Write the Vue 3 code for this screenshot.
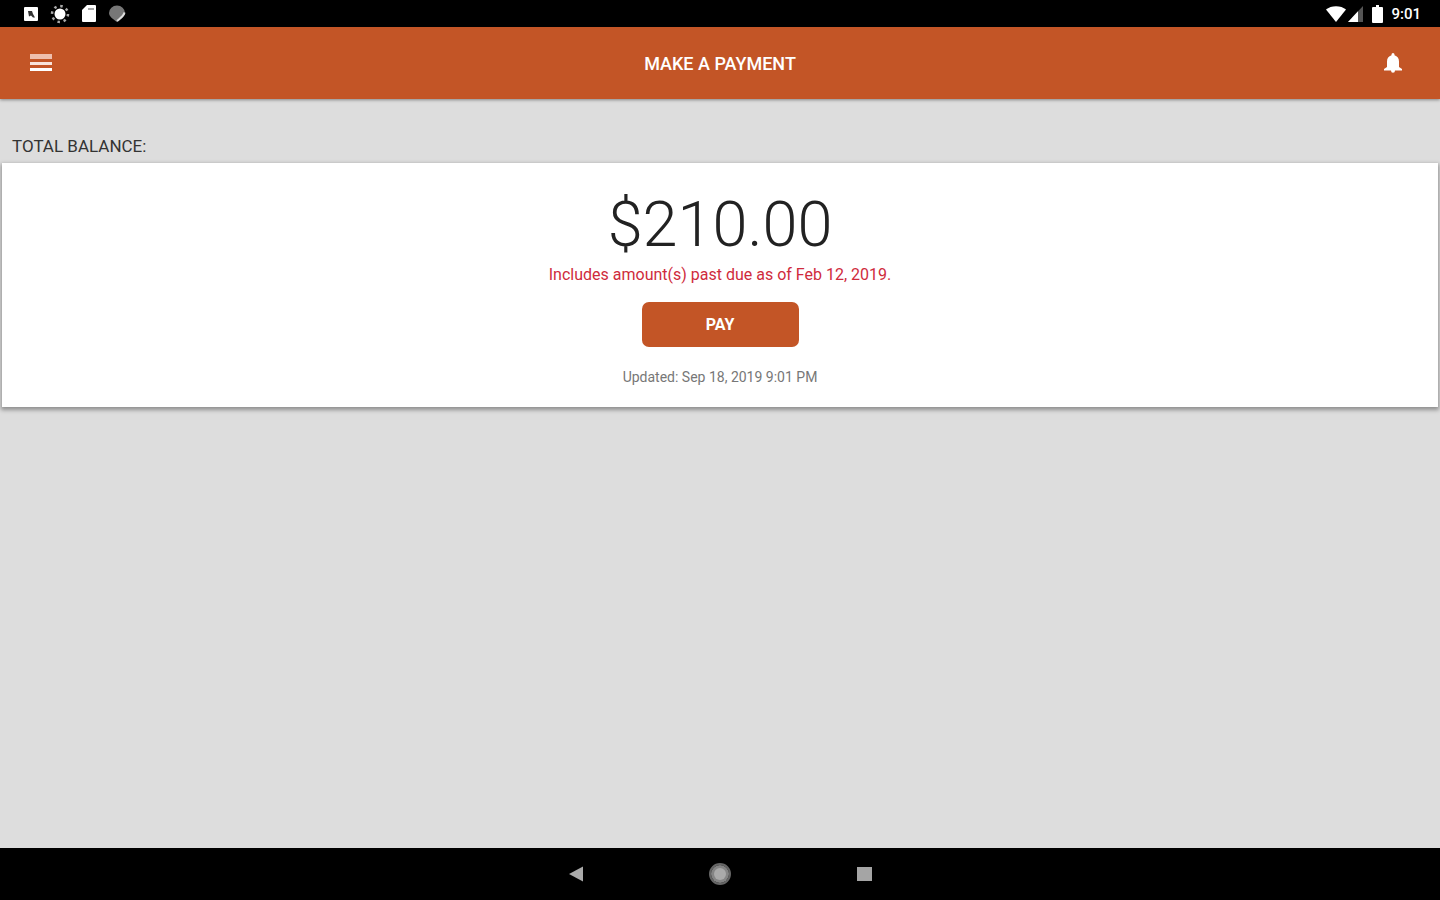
<script setup>
import { ref } from 'vue'

const time = ref('9:01')
const balance = ref('$210.00')
const pastDueDate = ref('Feb 12, 2019')
const updatedAt = ref('Sep 18, 2019 9:01 PM')
</script>

<template>
  <div class="screen">
    <div class="status-bar">
      <div class="status-left">
        <svg width="14" height="14" viewBox="0 0 14 14">
          <rect width="14" height="14" rx="1" fill="#fff" />
          <path d="M4 4h4l1 3 2 3.500H9L7 8.500 5 9.500z" fill="#333" />
        </svg>
        <svg width="20" height="20" viewBox="0 0 20 20">
          <circle cx="10" cy="10" r="8" fill="none" stroke="#aaa" stroke-width="2.500" stroke-dasharray="2.500 3.780" />
          <circle cx="10" cy="10" r="5.500" fill="#fff" />
        </svg>
        <svg width="14" height="17" viewBox="0 0 14 17">
          <path d="M5 0h8a1 1 0 0 1 1 1v15a1 1 0 0 1-1 1H1a1 1 0 0 1-1-1V5z" fill="#fff" />
          <path d="M6 4h6" stroke="#888" stroke-width="1.500" />
        </svg>
        <svg width="18" height="17" viewBox="0 0 18 17">
          <path d="M9 0.500a8 7.500 0 0 1 8 7.500c0 3-4 6-8 9C5 14 1 11.500 1 8a8 7.500 0 0 1 8-7.500z" fill="#777" />
          <path d="M16.500 7.500C16 11 12 13.500 9 16" fill="none" stroke="#ddd" stroke-width="2" />
        </svg>
      </div>
      <div class="status-right">
        <svg width="20" height="16" viewBox="0 0 20 16">
          <path d="M0 3.500C5-1 15-1 20 3.500L10 16z" fill="#fff" />
        </svg>
        <svg class="signal" width="15" height="16" viewBox="0 0 15 16">
          <path d="M0 16L15 0v16z" fill="#555" />
          <path d="M0 16L10 5.300V16z" fill="#fff" />
        </svg>
        <svg class="battery" width="11" height="18" viewBox="0 0 11 18">
          <path d="M4 0h3v2h3a1 1 0 0 1 1 1v14a1 1 0 0 1-1 1H1a1 1 0 0 1-1-1V3a1 1 0 0 1 1-1h3z" fill="#fff" />
        </svg>
        <span class="time">{{ time }}</span>
      </div>
    </div>

    <header class="app-bar">
      <button class="icon-btn" type="button" aria-label="Menu">
        <svg width="22" height="18" viewBox="0 0 22 18">
          <rect width="22" height="5" fill="#eebfae" />
          <rect y="8" width="22" height="3" fill="#f9e3da" />
          <rect y="14" width="22" height="3" fill="#fff" />
        </svg>
      </button>
      <h1>MAKE A PAYMENT</h1>
      <button class="icon-btn alerts" type="button" aria-label="Notifications">
        <svg width="18" height="20" viewBox="0 0 18 20">
          <path d="M9 0a1.500 1.500 0 0 1 1.500 1.500v.7C13.400 3 15 5.400 15 8.500V14l3 2v1.500H0V16l3-2V8.500C3 5.400 4.600 3 7.500 2.200v-.7A1.500 1.500 0 0 1 9 0zM7 17.500h4a2 2.200 0 0 1-4 0z" fill="#fff" />
        </svg>
      </button>
    </header>

    <main>
      <h2>TOTAL BALANCE:</h2>
      <section class="card">
        <div class="amount">{{ balance }}</div>
        <p class="past-due">Includes amount(s) past due as of {{ pastDueDate }}.</p>
        <button class="pay-btn" type="button">PAY</button>
        <p class="updated">Updated: {{ updatedAt }}</p>
      </section>
    </main>

    <nav class="nav-bar">
      <button type="button" aria-label="Back">
        <svg width="24" height="24" viewBox="0 0 24 24"><path d="M5 12L19 4.500v15z" fill="#aaa" /></svg>
      </button>
      <button type="button" aria-label="Home">
        <svg width="24" height="24" viewBox="0 0 24 24">
          <circle cx="12" cy="12" r="10" fill="none" stroke="#666" stroke-width="2" />
          <circle cx="12" cy="12" r="9" fill="#858585" />
          <circle cx="12" cy="12" r="6" fill="#aaa" />
        </svg>
      </button>
      <button type="button" aria-label="Recent apps">
        <svg width="24" height="24" viewBox="0 0 24 24"><rect x="5" y="5" width="15" height="14" fill="#a5a5a5" /></svg>
      </button>
    </nav>
  </div>
</template>

<style>
body {
  margin: 0;
  background: #ddd;
}
</style>

<style scoped>
.screen {
  display: flex;
  flex-direction: column;
  min-height: 100vh;
  background: #ddd;
  font-family: Roboto, 'Liberation Sans', sans-serif;
}

button {
  padding: 0;
  border: none;
  background: none;
  font-family: inherit;
  cursor: pointer;
}

svg {
  display: block;
}

.status-bar {
  display: flex;
  justify-content: space-between;
  height: 27px;
  padding: 0 19px 0 24px;
  background: #000;
}

.status-left,
.status-right {
  display: flex;
  align-items: center;
}

.status-left {
  gap: 12px;
}

.signal {
  margin-left: 2px;
}

.battery {
  margin: 0 8px 0 9px;
}

.time {
  color: #fff;
  font-size: 15px;
  font-weight: 500;
}

.app-bar {
  display: grid;
  grid-template-columns: 1fr auto 1fr;
  align-items: center;
  height: 72px;
  padding: 0 30px;
  background: #c35526;
  box-shadow: 0 1px 3px rgba(0, 0, 0, 0.4);
}

.icon-btn {
  display: flex;
  align-items: center;
  justify-content: center;
  width: 22px;
  height: 48px;
}

.alerts {
  width: 34px;
  justify-self: end;
}

h1 {
  margin: 0;
  padding-top: 2px;
  color: #fff;
  font-size: 18px;
  font-weight: 500;
  line-height: 24px;
}

main {
  flex: 1;
}

h2 {
  margin: 0;
  padding: 35px 12px 5px;
  color: #333;
  font-size: 17px;
  font-weight: 400;
  line-height: 24px;
}

.card {
  display: flex;
  flex-direction: column;
  align-items: center;
  margin: 0 2px;
  padding: 26px 16px 18px;
  background: #fff;
  box-shadow: 0 2px 4px 1px rgba(0, 0, 0, 0.35);
}

.amount {
  color: #222;
  font-size: 63px;
  font-weight: 300;
  line-height: 72px;
}

.past-due {
  margin: 2px 0 0;
  color: #cf2b3c;
  font-size: 16px;
  line-height: 24px;
}

.pay-btn {
  width: 157px;
  height: 45px;
  margin: 15px 0 18px;
  border-radius: 7px;
  background: #c35526;
  color: #fff;
  font-size: 16px;
  font-weight: 700;
}

.updated {
  margin: 0;
  color: #777;
  font-size: 14px;
  line-height: 24px;
}

.nav-bar {
  display: flex;
  align-items: center;
  justify-content: center;
  gap: 120px;
  height: 52px;
  background: #000;
}
</style>
